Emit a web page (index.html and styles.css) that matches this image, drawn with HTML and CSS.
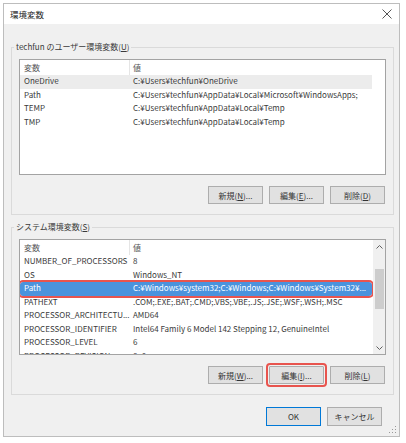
FILE: index.html
```html
<!DOCTYPE html>
<html lang="ja">
<head>
	<meta charset="UTF-8">
	<title>環境変数</title>
	<link rel="stylesheet" href="styles.css">
</head>
<body>
	<div class="window">
		<div class="titlebar">
			<span class="title">環境変数</span>
			<svg class="close" width="10" height="10" viewBox="0 0 10 10">
				<path d="M0.5 0.5L9.5 9.5M9.5 0.5L0.5 9.5" stroke="#555" stroke-width="1" fill="none"/>
			</svg>
		</div>

		<fieldset class="group">
			<legend>techfun のユーザー環境変数(<u>U</u>)</legend>
			<div class="list">
				<div class="table">
					<div class="row head"><span class="name">変数</span><span class="value">値</span></div>
					<div class="row hover"><span class="name">OneDrive</span><span class="value">C:¥Users¥techfun¥OneDrive</span></div>
					<div class="row"><span class="name">Path</span><span class="value">C:¥Users¥techfun¥AppData¥Local¥Microsoft¥WindowsApps;</span></div>
					<div class="row"><span class="name">TEMP</span><span class="value">C:¥Users¥techfun¥AppData¥Local¥Temp</span></div>
					<div class="row"><span class="name">TMP</span><span class="value">C:¥Users¥techfun¥AppData¥Local¥Temp</span></div>
				</div>
			</div>
			<div class="buttons">
				<button class="btn">新規(<u>N</u>)...</button>
				<button class="btn">編集(<u>E</u>)...</button>
				<button class="btn">削除(<u>D</u>)</button>
			</div>
		</fieldset>

		<fieldset class="group second">
			<legend>システム環境変数(<u>S</u>)</legend>
			<div class="list">
				<div class="table">
					<div class="row head"><span class="name">変数</span><span class="value">値</span></div>
					<div class="row"><span class="name">NUMBER_OF_PROCESSORS</span><span class="value">8</span></div>
					<div class="row"><span class="name">OS</span><span class="value">Windows_NT</span></div>
					<div class="row selected"><span class="name">Path</span><span class="value">C:¥Windows¥system32;C:¥Windows;C:¥Windows¥System32¥...</span></div>
					<div class="row"><span class="name">PATHEXT</span><span class="value">.COM;.EXE;.BAT;.CMD;.VBS;.VBE;.JS;.JSE;.WSF;.WSH;.MSC</span></div>
					<div class="row"><span class="name">PROCESSOR_ARCHITECTU...</span><span class="value">AMD64</span></div>
					<div class="row"><span class="name">PROCESSOR_IDENTIFIER</span><span class="value">Intel64 Family 6 Model 142 Stepping 12, GenuineIntel</span></div>
					<div class="row"><span class="name">PROCESSOR_LEVEL</span><span class="value">6</span></div>
					<div class="row"><span class="name">PROCESSOR_REVISION</span><span class="value">8e0c</span></div>
				</div>
				<div class="scrollbar">
					<div class="arrow">
						<svg width="7" height="4" viewBox="0 0 7 4"><path d="M0.5 3.5L3.5 0.5L6.5 3.5" stroke="#606060" fill="none"/></svg>
					</div>
					<div class="track"><div class="thumb"></div></div>
					<div class="arrow">
						<svg width="7" height="4" viewBox="0 0 7 4"><path d="M0.5 0.5L3.5 3.5L6.5 0.5" stroke="#606060" fill="none"/></svg>
					</div>
				</div>
			</div>
			<div class="buttons">
				<button class="btn">新規(<u>W</u>)...</button>
				<button class="btn marked">編集(<u>I</u>)...</button>
				<button class="btn">削除(<u>L</u>)</button>
			</div>
		</fieldset>

		<div class="footer">
			<button class="btn default">OK</button>
			<button class="btn">キャンセル</button>
		</div>

		<svg class="grip" width="8" height="8" viewBox="0 0 8 8">
			<rect x="6" y="0" width="1" height="1" fill="#999"/>
			<rect x="3" y="3" width="1" height="1" fill="#999"/>
			<rect x="6" y="3" width="1" height="1" fill="#999"/>
			<rect x="0" y="6" width="1" height="1" fill="#999"/>
			<rect x="3" y="6" width="1" height="1" fill="#999"/>
			<rect x="6" y="6" width="1" height="1" fill="#999"/>
		</svg>
	</div>
</body>
</html>
```

FILE: styles.css
```css
*{box-sizing:border-box;}
body{
	margin:0;
	padding:3px 0 0 3px;
	background:#fff;
	font-family:"Noto Sans CJK JP","Liberation Sans",sans-serif;
	font-size:8px;
	color:#3a3a3a;
}
.window{
	position:relative;
	width:397px;
	height:434px;
	border:1px solid #bdbdbd;
	background:#f0f0f0;
}
.titlebar{
	display:flex;
	align-items:center;
	height:20px;
	padding:0 7px 0 6px;
	background:#fff;
}
.title{
	font-size:8.5px;
	color:#222;
}
.close{
	margin-left:auto;
}
.group{
	width:383px;
	margin:17px 0 0 7px;
	padding:6px 7px 10px;
	border:1px solid #dadada;
	min-width:0;
}
.group.second{
	margin-top:6px;
}
legend{
	height:12px;
	line-height:12px;
	padding:0 2px;
	margin-left:-5px;
}
.list{
	display:flex;
	height:116px;
	border:1px solid #a3a3a3;
	background:#fff;
	overflow:hidden;
}
.table{
	width:352px;
	flex:none;
}
.row{
	display:flex;
	height:13.5px;
	line-height:12.5px;
	white-space:nowrap;
}
.row .name{
	width:110px;
	flex:none;
	padding-left:4px;
	overflow:hidden;
}
.row .value{
	padding-left:3px;
}
.row.head{
	height:15px;
	line-height:16px;
	color:#555;
}
.row.head .name{
	border-right:1px solid #e5e5e5;
}
.row.hover{
	background:#ececec;
}
.row.selected{
	background:#4a93dd;
	color:#fff;
	outline:2px solid #e8544e;
	border-radius:3px;
}
.scrollbar{
	display:flex;
	flex-direction:column;
	width:12px;
	margin-left:auto;
	background:#f0f0f0;
}
.arrow{
	display:flex;
	align-items:center;
	justify-content:center;
	height:13px;
}
.track{
	flex:1;
	padding:16px 1px 0 2px;
}
.thumb{
	height:40px;
	background:#cdcdcd;
}
.buttons{
	display:flex;
	justify-content:flex-end;
	gap:6px;
	margin-top:11px;
	padding-right:1px;
}
.btn{
	width:55px;
	height:18px;
	padding:0;
	border:1px solid #adadad;
	background:#e1e1e1;
	font-family:inherit;
	font-size:8px;
	color:#333;
}
.btn.marked{
	outline:2px solid #e8544e;
	outline-offset:1px;
	border-radius:1px;
}
.footer{
	display:flex;
	justify-content:flex-end;
	gap:6px;
	margin-top:12px;
	padding-right:17px;
}
.footer .btn{
	height:19px;
}
.btn.default{
	border-color:#0078d7;
}
.grip{
	position:absolute;
	right:2px;
	bottom:2px;
}
```
